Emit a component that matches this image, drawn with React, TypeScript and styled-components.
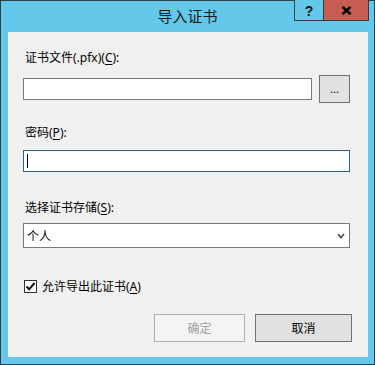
import React from "react";
import styled, { createGlobalStyle } from "styled-components";

const Global = createGlobalStyle`
  html, body { margin: 0; padding: 0; background: #63c8ea; }
  * { box-sizing: border-box; }
`;

const FONT = `"Noto Sans", "Noto Sans CJK SC", sans-serif`;

const Window = styled.div`
  width: 375px;
  height: 365px;
  border: 1px solid #2f3f46;
  background: #63c8ea;
  display: flex;
  flex-direction: column;
  font-family: ${FONT};
  color: #000;
`;

const TitleBar = styled.div`
  height: 30px;
  display: grid;
  grid-template-columns: 1fr auto 1fr;
  align-items: start;
`;

const Title = styled.div`
  grid-column: 2;
  font-size: 15px;
  line-height: 30px;
  color: #1b1b1b;
`;

const Controls = styled.div`
  grid-column: 3;
  justify-self: end;
  display: flex;
  margin-right: 5px;
  margin-top: -1px;
`;

const CtlButton = styled.div<{ $w: number; $bg: string }>`
  width: ${(p) => p.$w}px;
  height: 21px;
  background: ${(p) => p.$bg};
  border: 1px solid #3a3a3a;
  border-top: none;
  display: flex;
  align-items: center;
  justify-content: center;
  & + & { border-left: none; }
`;

const Question = styled.span`
  font-family: "Liberation Sans", sans-serif;
  font-weight: bold;
  font-size: 14px;
  line-height: 1;
  color: #111;
  margin-top: 1px;
`;

const Body = styled.div`
  flex: 1;
  margin: 1px 6px 7px 7px;
  background: #f0f0f0;
  padding: 18px 0 0 15px;
  display: flex;
  flex-direction: column;
`;

const Label = styled.div<{ $mt?: number }>`
  font-size: 12px;
  line-height: 16px;
  height: 16px;
  margin-left: 2px;
  margin-top: ${(p) => p.$mt ?? 0}px;
  white-space: nowrap;
`;

const U = styled.span`
  text-decoration: underline;
  text-underline-offset: 2px;
`;

const Row = styled.div<{ $mt: number }>`
  display: flex;
  align-items: center;
  margin-top: ${(p) => p.$mt}px;
`;

const TextBox = styled.div<{ $w: number; $focus?: boolean; $h?: number }>`
  width: ${(p) => p.$w}px;
  height: ${(p) => p.$h ?? 22}px;
  background: #fff;
  border: 1px solid ${(p) => (p.$focus ? "#2f6190" : "#7a7a7a")};
  display: flex;
  align-items: center;
  padding-left: 2px;
  font-size: 13px;
`;

const Caret = styled.div`
  width: 1px;
  height: 14px;
  background: #000;
  margin-left: 1px;
`;

const Browse = styled.div`
  width: 31px;
  height: 28px;
  margin-left: 7px;
  background: #e1e1e1;
  border: 1px solid #707070;
  display: flex;
  align-items: center;
  justify-content: center;
  font-size: 11px;
  letter-spacing: 0px;
  padding-bottom: 1px;
`;

const SelectBox = styled.div`
  width: 327px;
  height: 25px;
  background: #fff;
  border: 1px solid #7a7a7a;
  display: flex;
  align-items: center;
  justify-content: space-between;
  padding: 0 4px 0 3px;
  font-size: 12px;
`;

const CheckRow = styled.div`
  display: flex;
  align-items: center;
  margin-top: 30px;
  height: 16px;
  font-size: 12px;
`;

const CheckBox = styled.div`
  width: 13px;
  height: 13px;
  background: #fff;
  border: 1px solid #333;
  display: flex;
  align-items: center;
  justify-content: center;
  margin-left: 1px;
  margin-right: 5px;
`;

const Buttons = styled.div`
  display: flex;
  gap: 10px;
  margin-top: 20px;
  margin-left: 131px;
`;

const Button = styled.div<{ $w: number; $disabled?: boolean }>`
  width: ${(p) => p.$w}px;
  height: 28px;
  border: 1px solid ${(p) => (p.$disabled ? "#b0b0b0" : "#707070")};
  background: ${(p) => (p.$disabled ? "#f4f4f4" : "#e1e1e1")};
  color: ${(p) => (p.$disabled ? "#a0a0a0" : "#000")};
  display: flex;
  align-items: center;
  justify-content: center;
  font-size: 12px;
`;

export default function App() {
  return (
    <>
      <Global />
      <Window>
        <TitleBar>
          <Title>导入证书</Title>
          <Controls>
            <CtlButton $w={30} $bg="#63c8ea">
              <Question>?</Question>
            </CtlButton>
            <CtlButton $w={45} $bg="#c75c50">
              <svg width="11" height="9" viewBox="0 0 11 9">
                <path d="M1.5 0.8 L9.5 8.2 M9.5 0.8 L1.5 8.2" stroke="#000" strokeWidth="2.6" />
              </svg>
            </CtlButton>
          </Controls>
        </TitleBar>
        <Body>
          <Label>
            证书文件(.pfx)(<U>C</U>):
          </Label>
          <Row $mt={9}>
            <TextBox $w={289} />
            <Browse>...</Browse>
          </Row>
          <Label $mt={22}>
            密码(<U>P</U>):
          </Label>
          <Row $mt={9}>
            <TextBox $w={327} $focus>
              <Caret />
            </TextBox>
          </Row>
          <Label $mt={28}>
            选择证书存储(<U>S</U>):
          </Label>
          <Row $mt={7}>
            <SelectBox>
              <span>个人</span>
              <svg width="8" height="6" viewBox="0 0 8 6">
                <path d="M1 1 L4 4.5 L7 1" stroke="#555" strokeWidth="1.8" fill="none" />
              </svg>
            </SelectBox>
          </Row>
          <CheckRow>
            <CheckBox>
              <svg width="11" height="11" viewBox="0 0 11 11">
                <path d="M1.5 5.5 L4.2 8.3 L9.5 2" stroke="#111" strokeWidth="2" fill="none" />
              </svg>
            </CheckBox>
            <span>
              允许导出此证书(<U>A</U>)
            </span>
          </CheckRow>
          <Buttons>
            <Button $w={91} $disabled>确定</Button>
            <Button $w={97}>取消</Button>
          </Buttons>
        </Body>
      </Window>
    </>
  );
}
